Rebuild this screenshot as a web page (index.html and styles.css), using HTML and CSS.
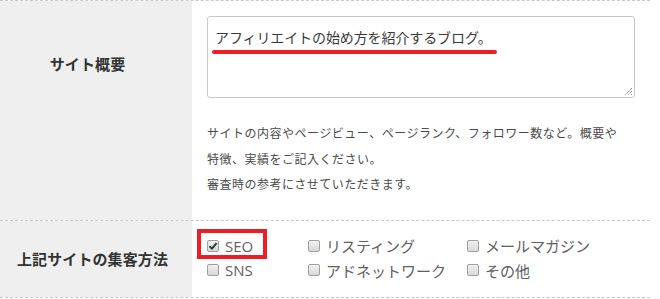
FILE: index.html
```html
<!DOCTYPE html>
<html lang="ja">
<head>
<meta charset="utf-8">
<link rel="stylesheet" href="styles.css">
</head>
<body>
<div class="form">
  <div class="row row-summary">
    <div class="label label-summary">サイト概要</div>
    <div class="field">
      <div class="textarea">
        <span class="ta-text">アフィリエイトの始め方を紹介するブログ。</span>
        <span class="underline"></span>
        <svg class="grip" width="10" height="10" viewBox="0 0 10 10"><path d="M9 2 L2 9 M9 5 L5 9 M9 8 L8 9" stroke="#555" stroke-width="1" stroke-dasharray="1 1" fill="none"/></svg>
      </div>
      <p class="help">サイトの内容やページビュー、ページランク、フォロワー数など。概要や<br>特徴、実績をご記入ください。<br>審査時の参考にさせていただきます。</p>
    </div>
  </div>
  <div class="row row-method">
    <div class="label label-method">上記サイトの集客方法</div>
    <div class="field checks">
      <div class="check check-highlight"><span class="box checked"><svg width="10" height="10" viewBox="0 0 10 10"><path d="M1.5 5.2 L4 7.6 L8.6 2.2" stroke="#333" stroke-width="2" fill="none"/></svg></span>SEO<span class="mark"></span></div>
      <div class="check"><span class="box"></span>リスティング</div>
      <div class="check"><span class="box"></span>メールマガジン</div>
      <div class="check"><span class="box"></span>SNS</div>
      <div class="check"><span class="box"></span>アドネットワーク</div>
      <div class="check"><span class="box"></span>その他</div>
    </div>
  </div>
</div>
</body>
</html>
```
FILE: styles.css
```css
* { box-sizing: border-box; }
html, body { margin: 0; padding: 0; background: #fff; }
body { font-family: "Noto Sans CJK JP", "Noto Sans", sans-serif; color: #333; }

.form { width: 650px; border-bottom: 1px dashed #c8c8c8; }

.row {
  display: grid;
  grid-template-columns: 192px 458px;
  border-top: 1px dashed #c8c8c8;
}

.label {
  background: #efefef;
  font-size: 15px;
  font-weight: bold;
  line-height: 20px;
  color: #333;
  text-align: center;
  letter-spacing: 0.1px;
}
.label-summary { padding: 53px 17px 0 0; }
.label-method { padding: 0 7px 0 0; display: flex; align-items: center; justify-content: center; }

.field { padding-left: 15px; }
.row-summary .field { padding-top: 15px; padding-bottom: 23px; }

.textarea {
  position: relative;
  width: 428px;
  height: 82px;
  border: 1px solid #c9c9c9;
  border-radius: 3px;
  padding: 10px 0 0 7px;
  font-size: 14px;
  line-height: 20px;
  color: #3a3a3a;
}
.ta-text { letter-spacing: -0.1px; white-space: nowrap; }
.underline {
  position: absolute;
  left: 4px;
  top: 33px;
  width: 285px;
  height: 4px;
  border-radius: 2px;
  background: #ee1c25;
}
.grip { position: absolute; right: 1px; bottom: 1px; }

.help {
  margin: 22px 0 0 0;
  font-size: 12px;
  line-height: 25.5px;
  letter-spacing: 0.5px;
  color: #4a4a4a;
  white-space: nowrap;
}

.checks {
  display: grid;
  grid-template-columns: 101px 159px auto;
  grid-auto-rows: 24.5px;
  padding-top: 13px;
  padding-bottom: 14px;
}
.check {
  position: relative;
  display: flex;
  align-items: center;
  font-family: "Open Sans", "Noto Sans CJK JP", sans-serif;
  font-size: 15px;
  color: #606060;
  white-space: nowrap;
  letter-spacing: 0;
}
.box {
  width: 12px;
  height: 12px;
  margin-right: 6px;
  border: 1px solid #a0a0a0;
  border-radius: 2px;
  background: linear-gradient(#f0f0f0, #d8d8d8);
  display: flex;
  align-items: center;
  justify-content: center;
  flex: none;
}
.mark {
  position: absolute;
  left: -10px;
  top: -5px;
  width: 70px;
  height: 30px;
  border: 4px solid #ee1c25;
}
```
